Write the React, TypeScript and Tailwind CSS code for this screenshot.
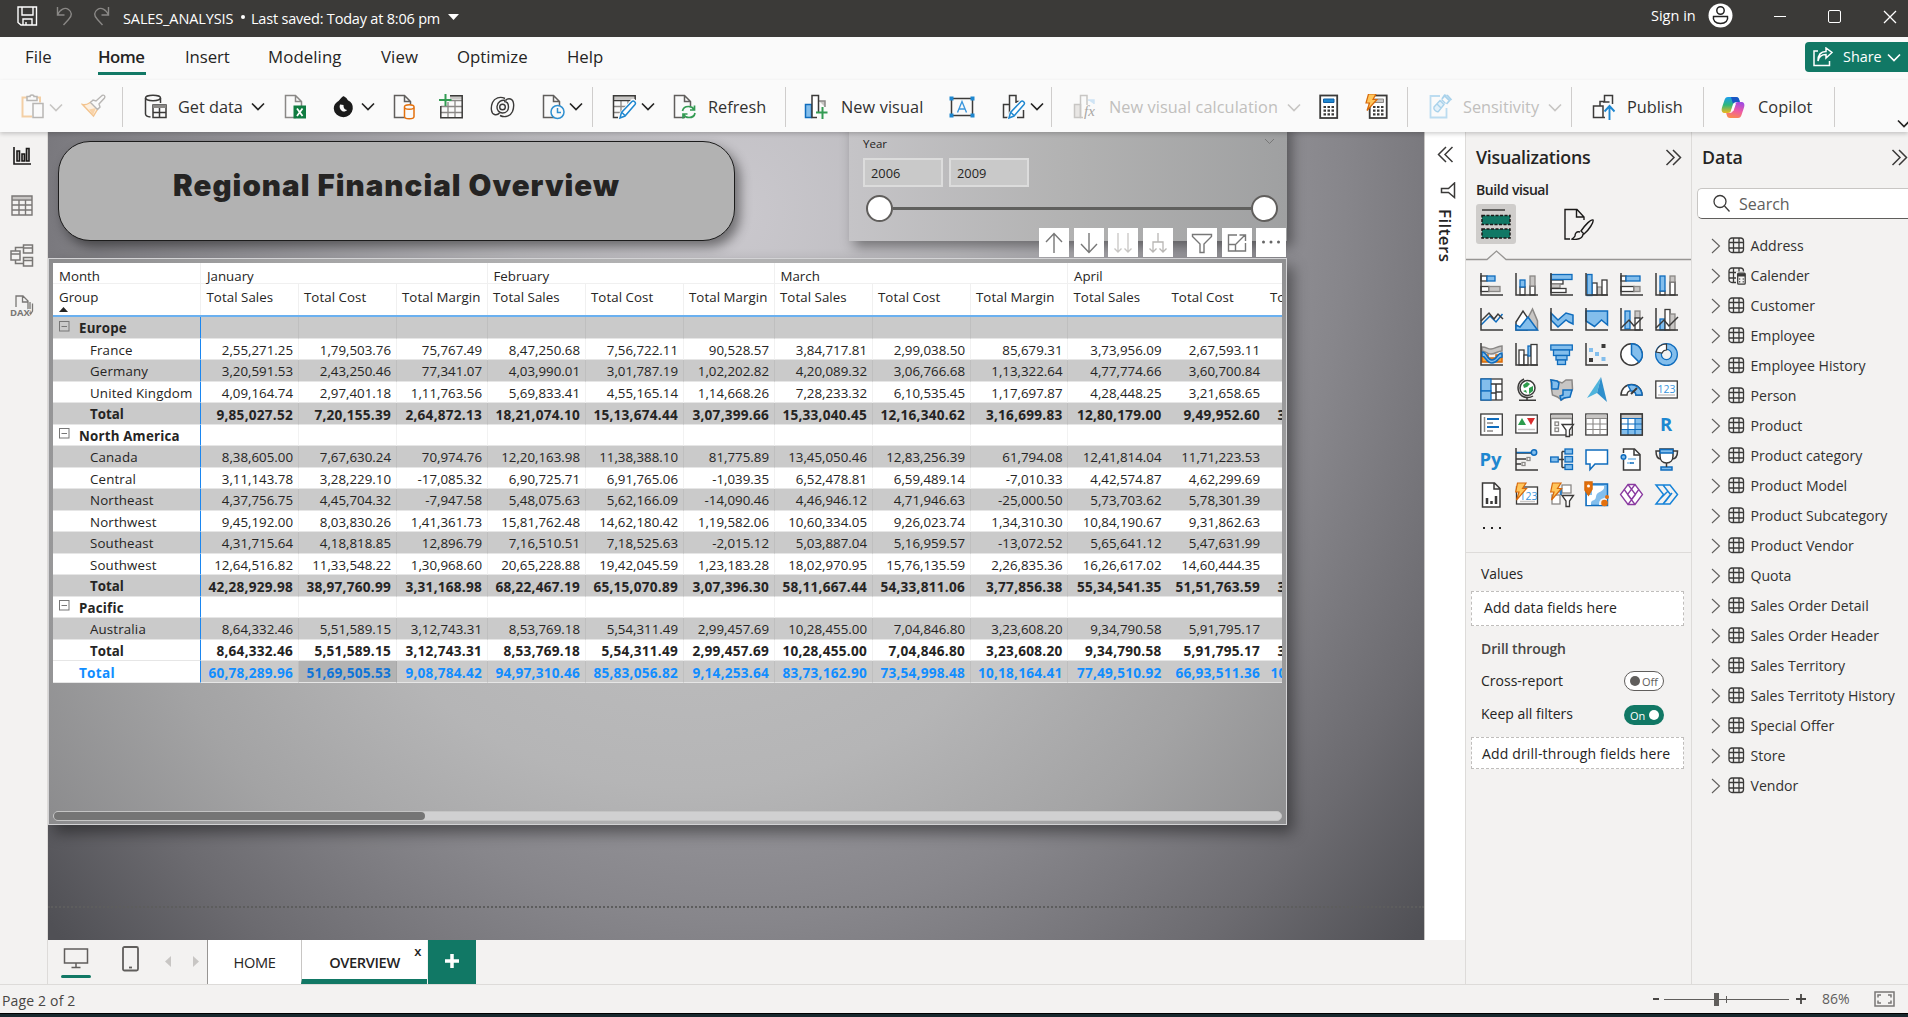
import React from "react";

type P = { className?: string };
const D = "#3b3a39";
const G = "#8a8886";
const L = "#c8c6c4";
const B = "#0f6cbd";
const F = "#83beec";
const W = "#ffffff";

function Svg({ w = 23, h = 23, className = "", children, sw = 1.5 }: { w?: number; h?: number; className?: string; children: React.ReactNode; sw?: number }) {
  return (
    <svg width={w} height={h} viewBox={`0 0 ${w} ${h}`} fill="none" stroke={D} strokeWidth={sw} className={"shrink-0 " + className}>
      {children}
    </svg>
  );
}

const Chevron = ({ className = "", color = "#252423" }: P & { color?: string }) => (
  <svg width="14" height="9" viewBox="0 0 14 9" fill="none" stroke={color} strokeWidth="1.7" className={"shrink-0 " + className}>
    <path d="M1 1.5l6 6 6-6" />
  </svg>
);

const Sep = ({ className = "" }: P) => <div className={"h-10 w-px shrink-0 bg-[#cfcdcc] " + className} />;

function Cell({ className = "", children }: P & { children: React.ReactNode }) {
  return <div className={"flex h-full shrink-0 items-center whitespace-nowrap " + className}>{children}</div>;
}

/* ---------- ribbon icons ---------- */
const Doc = ({ stroke = "#605e5c", children }: { stroke?: string; children?: React.ReactNode }) => (
  <Svg w={24} h={26}>
    <path d="M12 23.5H1.5V1.5h10l6 6V12M11.5 1.5v6h6" stroke={stroke} />
    {children}
  </Svg>
);
const Paste = () => (
  <Svg w={24} h={26}>
    <path d="M11 22.5H1.5v-19H6M16 3.5h3v5" stroke="#f3cfa5" strokeWidth="2" />
    <path d="M6 6.5v-4h3c0-2 4-2 4 0h3v4z" stroke="#b8b6b4" />
    <rect x="12" y="9.5" width="10" height="14" stroke="#b8b6b4" fill="#fafafa" />
  </Svg>
);
const Brush = () => (
  <Svg w={25} h={24} sw={1.4}>
    <path d="M1.500 10.500c4 1 6-1 8.500-2.500l7 6.500L12.500 22z" stroke="#f3c48f" fill="#fdf0e0" />
    <path d="M8 15.500l7-1.500-3 7z" fill="#f9d3a8" stroke="none" />
    <path d="M9.500 8.500L12 6l3 1 6-5.500c2-1 3.500.5 2.500 2.500L18 10l1 3-2.500 2.500z" stroke="#b8b6b4" fill="#fafafa" />
  </Svg>
);
const GetData = () => (
  <Svg w={24} h={26}>
    <ellipse cx="9" cy="4" rx="7.500" ry="2.700" />
    <path d="M1.500 4v16c0 1.500 2 2.600 5 3M16.500 4v5" />
    <rect x="9" y="11" width="13" height="12.500" />
    <path d="M9 12.500h13" strokeWidth="3" stroke={G} />
    <path d="M9 18.500h13M15.500 14v9" />
  </Svg>
);
const Excel = () => (
  <Doc stroke={G}>
    <rect x="9.500" y="11.500" width="12.500" height="13" fill="#107c41" stroke="none" />
    <path d="M13 14.500l5.500 7.500M18.500 14.500L13 22" stroke="#fff" strokeWidth="1.800" />
  </Doc>
);
const OneLake = () => (
  <Svg w={21} h={22}>
    <path d="M10.500 1c2 1 3.500 2 4 4 3 1.500 5 4 4.500 8-.5 4-4 7.500-8.500 7.500S1.500 17 1.500 12.500 4 7 6 5.500 8.500 2 10.500 1z" fill="#1b1b1b" stroke="#1b1b1b" />
    <path d="M7 8.500c-1 3 0 5 2 6.500 1.800 1 4 .5 5-1-2.500-.5-3.700-2-3.500-5z" fill="#fafafa" stroke="none" />
  </Svg>
);
const Sql = () => (
  <Doc>
    <path d="M11.500 13.500v9c0 3 9.500 3 9.500 0v-9" stroke="#e3700d" fill="#fafafa" />
    <ellipse cx="16.250" cy="13" rx="4.800" ry="2.300" stroke="#e3700d" fill="#fafafa" />
  </Doc>
);
const EnterData = () => (
  <Svg w={25} h={26}>
    <path d="M11 2h12v3H11z" fill={L} stroke="none" />
    <path d="M2 12.500h21M2 18.500h21M9 8v15M16 6v17M10 6.500h13" stroke={G} strokeWidth="1.300" />
    <path d="M11 1.700h12.200v22H1.800V12" />
    <path d="M6.500 0v12M0 6h12.500" stroke="#339b53" strokeWidth="2" />
  </Svg>
);
const Dataverse = () => (
  <Svg w={25} h={22} sw={1.4}>
    <path d="M15 2.500C10 0 4.500 2 2.500 6.500.5 11.500 1 17.500 4.500 18.500c3 .8 5-1.500 5-1.500" />
    <path d="M10 19.500c5 2.500 10.500.5 12.500-4 2-5 1.500-11.500-2-12.500-3-.8-5 1.500-5 1.500" />
    <path d="M15.500 4.500c-4-1-8 1.500-8.500 6-.3 3.500 2 6.500 5.500 6.500s6-2.500 6-6-2-5.500-4.500-5.500" />
    <circle cx="12.500" cy="11" r="2.800" />
  </Svg>
);
const Recent = () => (
  <Doc>
    <circle cx="15.500" cy="18" r="6.500" stroke="#2f8fd0" fill="#fafafa" />
    <path d="M15.500 14v4.500h3.500" stroke="#2f8fd0" />
  </Doc>
);
const Pencil = ({ x = 9, y = 6 }: { x?: number; y?: number }) => (
  <g transform={`translate(${x} ${y})`}>
    <path d="M0 19l1.500-5.500L12 1.500c1.500-1.500 4.500 1 3 3L5 16.500z" fill="#fafafa" stroke="#fafafa" strokeWidth="4" />
    <path d="M0 18l1.500-5.500L12 1.500c1.500-1.500 4.500 1 3 3L5 16z" fill="#fff" stroke="#1e87d0" />
    <path d="M2 12.500l3 3" stroke="#1e87d0" />
  </g>
);
const Transform = () => (
  <Svg w={25} h={26}>
    <path d="M2 2h21v3H2z" fill={L} stroke="none" />
    <path d="M2 12.500h18M2 18.500h9M9 6v17M16 6v9" stroke={G} strokeWidth="1.300" />
    <path d="M6 23.500H1.500V1.700h21.700V6.500H2" />
    <Pencil x={8} y={6} />
  </Svg>
);
const Refresh = () => (
  <Doc>
    <path d="M9.500 17c.5-3 3-4.500 6-4.500 2.500 0 4.500 1 5.500 3M22 19c-.5 3-3 4.500-6 4.500-2.500 0-4.500-1-5.500-3M21.500 11.500v4.500h-4.500M10 24.500V20h4.500" stroke="#339b53" strokeWidth="1.700" />
  </Doc>
);
const NewVisual = () => (
  <Svg w={24} h={26}>
    <rect x="1.500" y="10.500" width="6" height="13" fill={F} stroke={B} />
    <path d="M15 7h6v6" stroke={G} fill={L} />
    <path d="M13 23.500H8V1.500h6.500v17" fill="#fff" />
    <path d="M18.500 13v12M12 18.500h11.500" stroke="#339b53" strokeWidth="2" />
  </Svg>
);
const TextBox = () => (
  <Svg w={26} h={22}>
    <rect x="2.500" y="2.500" width="21" height="17" />
    <path d="M8.500 16.500l4.500-11 4.500 11M10 13h6" stroke="#3a96dd" strokeWidth="1.400" />
    <path d="M.5.500h4v4h-4zM21.500.500h4v4h-4zM.5 17.500h4v4h-4zM21.500 17.500h4v4h-4z" fill="#1e87d0" stroke="none" />
  </Svg>
);
const MoreVisual = () => (
  <Svg w={25} h={26}>
    <path d="M7.500 23.500H1.500v-13h6M7.500 23.500V1.500H14V9M14 7.500h7.500M21.500 16v7.500H15" />
    <Pencil x={7} y={6} />
  </Svg>
);
const VisualCalc = () => (
  <Svg w={24} h={26}>
    <rect x="1.500" y="10.500" width="6" height="13" stroke={L} fill="#e8e6e4" />
    <path d="M15 6h6v4" stroke="#cfe4f5" fill="#cfe4f5" />
    <path d="M10 23.500H7.500V1.500H14V11" stroke={L} />
    <text x="11" y="22" fontSize="15" fontStyle="italic" fill="#a8a6a4" stroke="none" className="font-['Liberation_Serif',serif]">fx</text>
  </Svg>
);
const Calc = ({ bolt = false }: { bolt?: boolean }) => (
  <Svg w={bolt ? 24 : 20} h={26}>
    <g transform={bolt ? "translate(3.500 0)" : ""}>
      <rect x="1.200" y="1.500" width="17" height="22.500" strokeWidth="1.800" fill="#fff" />
      <path d="M4.500 5h10.500v3.500H4.500z" fill={bolt ? L : "#1e87d0"} stroke={bolt ? G : "#1160a5"} strokeWidth="1" />
      <path d="M4.500 13h2.500M8.500 13H11M12.500 13h2.500M4.500 16.700h2.500M8.500 16.700H11M12.500 16.700h2.500M4.500 20.300h2.500M8.500 20.300H11M12.500 20.300h2.500" strokeWidth="2.200" />
    </g>
    {bolt && <path d="M3.500 0h7.500L8 5.500h4L2 16.500l2.500-7.500H1z" fill="#ffc65c" stroke="#d8690a" strokeWidth="1.200" />}
  </Svg>
);
const Sens = () => (
  <Svg w={24} h={26}>
    <path d="M11 2H1.500v21.500h16V14" stroke="#bcdcf0" strokeWidth="1.800" />
    <path d="M5 13l6-6.500 4 4-5.500 7c-2 1-5.500-2-4.500-4.500zM8 10l4 4M12.500 5.500l4 4" stroke="#a9d2eb" strokeWidth="1.400" fill="#e3f1fa" />
    <path d="M13 5l2.500-3.500 5 5-3 3.500M18 1l4.500 5M16.500.500v3" stroke="#a9d2eb" strokeWidth="1.800" />
  </Svg>
);
const Publish = () => (
  <Svg w={24} h={26}>
    <path d="M8 11V7.500h4M12.500 8V1.500h8V10M13 23.500H1.500V12h9.500v4M8 12V7.500M11 12v11.500M11 8h6.500" />
    <path d="M17.500 26V12.500M12.500 17.500l5-5.500 5 5.500" stroke="#1e87d0" strokeWidth="1.900" />
  </Svg>
);
const Copilot = () => (
  <svg width="24" height="23" viewBox="0 0 24 23" className="shrink-0">
    <defs>
      <linearGradient id="cpa" x1="0" y1="0" x2="0" y2="1"><stop offset="0" stopColor="#1b9df0" /><stop offset=".5" stopColor="#2fb77a" /><stop offset="1" stopColor="#f1b81d" /></linearGradient>
      <linearGradient id="cpb" x1="0.6" y1="0" x2="0.3" y2="1"><stop offset="0" stopColor="#a14be0" /><stop offset=".5" stopColor="#ee5aa5" /><stop offset="1" stopColor="#fb8b4b" /></linearGradient>
    </defs>
    <path d="M7 1h8c2 0 2.800 1 3.300 3l.5 2h-3.500c-2 0-3 1-3.600 3L10 14.500c-.6 1.800-1.300 2.500-3 2.500H4c-3 0-4-2-3-5.500L3.500 4C4.200 2 5 1 7 1z" fill="url(#cpa)" />
    <path d="M10 1h5c2 0 2.800 1 3.300 3l.5 2h-3.500c-2 0-3 1-3.300 2z" fill="#1a56c4" />
    <path d="M17 22H9c-2 0-2.800-1-3.300-3L5.200 17h3.500c2 0 3-1 3.600-3L14 8.500c.6-1.800 1.300-2.500 3-2.500h3c3 0 4 2 3 5.500L20.500 19c-.7 2-1.500 3-3.500 3z" fill="url(#cpb)" />
    <path d="M10.200 15L12.800 7.500h2.200l-2.600 7.500z" fill="#fff" />
  </svg>
);

/* ---------- visual gallery ---------- */
const axis = <path d="M1 0v22h22" />;
const r = (x: number, y: number, w: number, h: number, s = D, f = W) => <rect x={x} y={y} width={w} height={h} stroke={s} fill={f} strokeWidth="1.3" />;
const bolt = <path d="M2.500 0H11L7.500 5.500h4L1.500 17l2.500-8H.700z" fill="#ffc65c" stroke="#d8690a" strokeWidth="1.2" />;
const txt = (s: string, x: number, y: number, size: number, fill = "#1e87d0", bold = true) => (
  <text x={x} y={y} fontSize={size} fill={fill} stroke="none" fontWeight={bold ? 700 : 400} className="font-['Open_Sans',sans-serif]">{s}</text>
);

const gallery: React.ReactNode[] = [
  <>{r(1, 3, 6, 5)}{r(7, 3, 8, 5, B, F)}{r(1, 13.5, 8, 5)}{r(9, 13.5, 11, 5, G, L)}{axis}</>,
  <>{r(5, 14, 5, 8)}{r(5, 7, 5, 7, B, F)}{r(15, 13, 5, 9)}{r(15, 3, 5, 10, G, L)}{axis}</>,
  <>{r(1, 7, 12, 4)}{r(1, 11, 9, 4, G, L)}{r(1, 15.5, 15, 4)}{r(1, 1.5, 21, 5, B, F)}{axis}</>,
  <>{r(12, 14, 5, 8, G, L)}{r(7, 10, 5, 12)}{r(17, 7, 5, 15)}{r(2, 1.5, 5, 21, B, F)}{axis}</>,
  <>{r(1, 3, 5, 5)}{r(6, 3, 14, 5, B, F)}{r(1, 13.5, 13, 5)}{r(14, 13.5, 6, 5, G, L)}{axis}</>,
  <>{r(5, 18, 5, 4)}{r(5, 3, 5, 15, B, F)}{r(15, 9, 5, 13)}{r(15, 3, 5, 6, G, L)}{axis}</>,
  <><path d="M1 17L10 8l6 6 6.500-8" stroke={B} /><path d="M1 13l8-8 5 6 4-5 5 5" />{axis}</>,
  <><path d="M12 22V12L17.500 1 22.500 13v9z" fill={L} stroke={G} /><path d="M1 22v-8L8 3l10 15-6 4z" fill={W} /><path d="M1 22v-5l4 2 8-10 9.500 13z" fill={F} stroke={B} /></>,
  <><path d="M1 5l7 7 8-7 7 2v9l-4-2-3-2-8 7-7-7z" fill={F} stroke={B} />{axis}</>,
  <><path d="M1 3h21.500v14l-6-5-7 6.500L1 13z" fill={F} stroke={B} />{axis}</>,
  <>{r(5, 3, 5, 18, B, F)}{r(15, 3, 5, 7, G, L)}{r(15, 10, 5, 12)}<path d="M1 20l8-8 5 6 9-9" />{axis}</>,
  <>{r(5, 11, 5, 11, B, F)}{r(10, 1.5, 5, 20.5)}{r(15, 6, 5, 16, G, L)}<path d="M1 20l8-8 5 6 9-9" />{axis}</>,
  <><path d="M2 4c5 0 5 2 9 2s6-3 11-3v5c-5 0-6 3-11 3S6 8 2 8z" fill={L} stroke={G} /><path d="M2 12h6v3h8v-3h6v7h-7l-2-2h-4v2H2z" fill="#f6a33a" stroke="#d8690a" /><path d="M2 9c5 0 5 8 10 8s5-7 10-7v4c-4 0-4 6-10 6S6 13 2 13z" fill={F} stroke={B} />{axis}</>,
  <>{r(4, 7, 5, 15)}{r(9, 12, 4, 10)}{r(13, 3, 3, 10, B, F)}{r(16, 1.5, 6, 20.5)}{axis}</>,
  <>{r(0.8, 2, 21.5, 5, B, F)}{r(3.5, 7, 16, 5.5, B, F)}{r(6, 12.5, 11, 4.5, B, F)}{r(7.5, 17, 8, 4.5, B, F)}</>,
  <>{axis}<path d="M4 5h4v4H4zM10 9h4v4h-4zM16.500 14h4v4h-4z" fill={F} stroke="none" /><path d="M16.500 1h4v4h-4zM4 15h4v4H4z" fill={D} stroke="none" /></>,
  <><circle cx="11.500" cy="11.500" r="10.700" fill={W} /><path d="M11.500.800a10.700 10.700 0 0 1 7.500 18.300L11.500 11.500z" fill={F} stroke={B} /></>,
  <><circle cx="11.500" cy="11.500" r="8" stroke={B} strokeWidth="7" /><circle cx="11.500" cy="11.500" r="8" stroke={F} strokeWidth="4.500" /><path d="M1 9A10.500 10.500 0 0 1 11.500 1v6A5 5 0 0 0 7 10z" fill={W} stroke={D} strokeWidth="1.200" /></>,
  <>{r(1, 1, 21, 21)}{r(1, 1, 10, 12, B, F)}{r(1, 13, 10, 9, B, F)}<path d="M11 6h11M16 6v16M16 14h6M11 15h5" /></>,
  <><circle cx="12.500" cy="10" r="7.500" fill={W} stroke={D} /><path d="M8 7l4-3 3 2-3 3-3 1zM14 10l4-2v5l-4 3zM8 13l3-1 1 3z" fill="#2d9c4c" stroke="none" /><path d="M9 1C2 4 1 13 7 18c4 2 8 2 11 0M12 19v3M4 22.200h17" /></>,
  <><path d="M1 2l6 1 5 2 4-3h6l.5 9-3 6-5 3-3 2-4-3-5-2-1-6z" fill={L} stroke={G} /><path d="M1 2l6 1 2 2-1 6H2C1 9 3 7 1 2zM13 12h9l-2 7-6 1-3 2-1-4 3-1z" fill={F} stroke={B} /></>,
  <><path d="M16-1L2 20l10-5z" fill="#4fb4dc" stroke="none" /><path d="M16-1l6 25-10-9z" fill="#2e8fcc" stroke="none" /></>,
  <><path d="M1 17a10.500 10.500 0 0 1 21 0h-6a4.500 4.500 0 0 0-9 0z" fill={W} /><path d="M8 7.500A10.500 10.500 0 0 1 22 17h-6a4.500 4.500 0 0 0-5-4z" fill={F} stroke={B} /><path d="M11 16l6-6" strokeWidth="2" /></>,
  <>{r(0.8, 3, 21.5, 17)}{txt("123", 2.6, 14.5, 10.5, "#3a96dd", false)}<path d="M3 17h17" stroke={L} /></>,
  <>{r(0.8, 1, 21.5, 21)}<path d="M4.500 4v15" stroke={G} /><path d="M7 6h12M7 14h12" stroke={B} strokeWidth="2" /><path d="M7 10h6M7 18h6" stroke={G} /></>,
  <>{r(0.8, 2, 21.5, 18)}<path d="M3 12L7 5l4 7z" fill="#2d9c4c" stroke="none" /><path d="M12 5h8l-4 7z" fill="#d92c2c" stroke="none" /><path d="M3 16.500h17" stroke={L} /></>,
  <>{r(0.8, 1, 21.5, 21)}<path d="M1 2h21v3H1z" fill={L} stroke="none" /><path d="M1 5.500h21" stroke={G} />{r(5, 9, 3.5, 3.5, G)}{r(5, 15, 3.5, 3.5, G)}<path d="M12 11.500h11.500l-4 5.500v6.500h-3.500V17z" fill={W} strokeWidth="1.300" /></>,
  <>{r(0.8, 1, 21.5, 21)}<path d="M1.500 1.500h20v4h-20z" fill={L} stroke="none" /><path d="M1 5.500h21M1 11h21M1 16.500h21M8 6v16M15 6v16" stroke={G} strokeWidth="1.100" /></>,
  <>{r(0.8, 1, 21.5, 21)}<path d="M1.500 1.500h20v4h-20z" fill={L} stroke="none" /><path d="M15 5.500h7V22H1v-5.500h14z" fill={F} stroke="none" /><path d="M1 5.500h21M1 11h21M1 16.500h21M8 6v16M15 6v16" stroke={B} strokeWidth="1.100" /><path d="M.8 1h21.500v21H.8z" /></>,
  <>{txt("R", 5, 18, 18.5)}</>,
  <>{txt("Py", -0.5, 18, 18.5)}</>,
  <><path d="M1 5h15M1 11h10M1 16h5" /><circle cx="19" cy="4.500" r="2.700" stroke={B} fill={F} /><path d="M1 4.500h15" stroke={B} />{r(12, 9.5, 3, 3, G)}{r(7, 14.5, 3, 3, G)}{axis}</>,
  <><path d="M8 11.500h6M12 3.500v16M12 3.500h3M12 19.500h3" />{r(0.7, 9, 7.5, 5, B, F)}{r(15, 1, 7.5, 5, B, F)}{r(15, 8.5, 7.5, 5.5, B, F)}{r(15, 16.5, 7.5, 5, B, F)}</>,
  <><path d="M1 2h21.500v14H10l-5 5.500V16H1z" fill={W} stroke={B} /></>,
  <><path d="M3.500 5V1h11l5.500 5.500V22H3.500V12" fill={W} /><path d="M14 1v6h6" /><circle cx="3.500" cy="9" r="2.300" stroke={B} fill={F} /><path d="M8 11h8M7 15h4" stroke={F} /><path d="M10 15h4" stroke={B} /></>,
  <><path d="M5 1h13v7c0 4-2.500 7-6.500 7S5 12 5 8z" fill={W} /><path d="M5 1.500h13V5H5zM6 19h11v3H6z" fill={F} stroke={B} /><path d="M5 3H1c0 5 1 8 5 8M18 3h4.500c0 5-1.500 8-5.500 8M11.500 15v4" /></>,
  <><path d="M2.500 0h12l5.500 5.500V24H2.500zM14 0v6h6" fill={W} /><path d="M7 21v-6M11.500 21v-3M16 21v-8" strokeWidth="2.500" /></>,
  <>{r(1.5, 4, 21, 17)}{txt("123", 4.5, 16.5, 10.5, "#3a96dd", false)}<path d="M5 18.500h15" stroke={L} />{bolt}</>,
  <>{r(2, 12, 8, 9, G)}{r(12, 2, 9, 8, G)}<path d="M6 6h5v6" stroke={B} fill={F} /><path d="M12 12.500h11.500l-4 5.500v5.500h-3.500V18z" fill={W} strokeWidth="1.300" />{bolt}</>,
  <><path d="M1 1h21.500v21.500H1z" fill={F} stroke={B} /><path d="M19 3c1 4-3 5-6 7s-1 6-4 7-3 2-3 5H2V12h5V3z" fill={W} stroke="none" /><path d="M14 22c0-4 1-6 5-7s3 4 3 7z" fill="#f3f2f1" stroke="none" /><path d="M0-1h7v7l-3.500 6L0 7z" fill="#e3700d" stroke="#d8690a" /><circle cx="3.500" cy="3" r="1.500" fill={W} stroke="none" /><circle cx="19.500" cy="20" r="3.300" fill="#e3700d" stroke="none" /><circle cx="22" cy="14" r="2" fill="#e3700d" stroke="none" /></>,
  <g stroke="#8a3aa0" strokeWidth="1.3"><path d="M8 1.500h7l7.500 10-7.500 10H8L.500 11.500z" fill={W} /><path d="M8 1.500l7.500 10-7.500 10M15 1.500l-7.500 10 7.500 10M4.200 6.500l7.300 10M18.800 6.500l-7.300 10" /></g>,
  <><path d="M1 2h14l7.500 9.500L15 21H1l7.500-9.500zM8 2l7.500 9.500L8 21M4 17l9-9M10 19l7-9" stroke="#1683d8" fill="none" /></>,
];

/* ---------- matrix ---------- */
const GRID = "grid grid-cols-[148px_97.5px_98px_91px_98px_98px_91px_98px_98px_97.5px_98px_98.5px_120px]";
type Row = { n: string; k: "g" | "r" | "t" | "s"; v?: string };
const rows: Row[] = [
  { n: "Europe", k: "g" },
  { n: "France", k: "r", v: "2,55,271.25 1,79,503.76 75,767.49 8,47,250.68 7,56,722.11 90,528.57 3,84,717.81 2,99,038.50 85,679.31 3,73,956.09 2,67,593.11" },
  { n: "Germany", k: "r", v: "3,20,591.53 2,43,250.46 77,341.07 4,03,990.01 3,01,787.19 1,02,202.82 4,20,089.32 3,06,766.68 1,13,322.64 4,77,774.66 3,60,700.84" },
  { n: "United Kingdom", k: "r", v: "4,09,164.74 2,97,401.18 1,11,763.56 5,69,833.41 4,55,165.14 1,14,668.26 7,28,233.32 6,10,535.45 1,17,697.87 4,28,448.25 3,21,658.65" },
  { n: "Total", k: "t", v: "9,85,027.52 7,20,155.39 2,64,872.13 18,21,074.10 15,13,674.44 3,07,399.66 15,33,040.45 12,16,340.62 3,16,699.83 12,80,179.00 9,49,952.60 3" },
  { n: "North America", k: "g" },
  { n: "Canada", k: "r", v: "8,38,605.00 7,67,630.24 70,974.76 12,20,163.98 11,38,388.10 81,775.89 13,45,050.46 12,83,256.39 61,794.08 12,41,814.04 11,71,223.53" },
  { n: "Central", k: "r", v: "3,11,143.78 3,28,229.10 -17,085.32 6,90,725.71 6,91,765.06 -1,039.35 6,52,478.81 6,59,489.14 -7,010.33 4,42,574.87 4,62,299.69" },
  { n: "Northeast", k: "r", v: "4,37,756.75 4,45,704.32 -7,947.58 5,48,075.63 5,62,166.09 -14,090.46 4,46,946.12 4,71,946.63 -25,000.50 5,73,703.62 5,78,301.39" },
  { n: "Northwest", k: "r", v: "9,45,192.00 8,03,830.26 1,41,361.73 15,81,762.48 14,62,180.42 1,19,582.06 10,60,334.05 9,26,023.74 1,34,310.30 10,84,190.67 9,31,862.63" },
  { n: "Southeast", k: "r", v: "4,31,715.64 4,18,818.85 12,896.79 7,16,510.51 7,18,525.63 -2,015.12 5,03,887.04 5,16,959.57 -13,072.52 5,65,641.12 5,47,631.99" },
  { n: "Southwest", k: "r", v: "12,64,516.82 11,33,548.22 1,30,968.60 20,65,228.88 19,42,045.59 1,23,183.28 18,02,970.95 15,76,135.59 2,26,835.36 16,26,617.02 14,60,444.35" },
  { n: "Total", k: "t", v: "42,28,929.98 38,97,760.99 3,31,168.98 68,22,467.19 65,15,070.89 3,07,396.30 58,11,667.44 54,33,811.06 3,77,856.38 55,34,541.35 51,51,763.59 3" },
  { n: "Pacific", k: "g" },
  { n: "Australia", k: "r", v: "8,64,332.46 5,51,589.15 3,12,743.31 8,53,769.18 5,54,311.49 2,99,457.69 10,28,455.00 7,04,846.80 3,23,608.20 9,34,790.58 5,91,795.17" },
  { n: "Total", k: "t", v: "8,64,332.46 5,51,589.15 3,12,743.31 8,53,769.18 5,54,311.49 2,99,457.69 10,28,455.00 7,04,846.80 3,23,608.20 9,34,790.58 5,91,795.17 3" },
  { n: "Total", k: "s", v: "60,78,289.96 51,69,505.53 9,08,784.42 94,97,310.46 85,83,056.82 9,14,253.64 83,73,162.90 73,54,998.48 10,18,164.41 77,49,510.92 66,93,511.36 10" },
];

function Matrix() {
  const cols = Array.from({ length: 12 }, (_, i) => i);
  return (
    <div className="w-[1229px] overflow-hidden text-[13.3px] leading-none text-[#252423]">
      <div className="w-[1340px] border-b-2 border-[#6ab0f0] bg-white">
        <div className={GRID + " h-[21px]"}>
          <div className="flex items-center border-r border-b border-[#f0f0f0] pt-[7px] pl-[6px]">Month</div>
          {["January", "February", "March", "April"].map((m, i) => (
            <div key={m} className={"col-span-3 flex items-center border-b border-[#f0f0f0] pt-[7px] pl-[6px] " + (i < 3 ? "border-r" : "")}>{m}</div>
          ))}
        </div>
        <div className={GRID + " h-[31px]"}>
          <div className="flex flex-col border-r border-[#f0f0f0] pt-[7px] pl-[6px]">
            <span>Group</span>
            <svg width="9" height="5" viewBox="0 0 9 5" className="mt-[3px]"><path d="M0 5L4.500 0 9 5z" fill="#252423" /></svg>
          </div>
          {cols.map((i) => (
            <div key={i} className={"border-[#f0f0f0] pt-[7px] pl-[5.5px] tracking-[0.05px] whitespace-nowrap " + (i < 9 ? "border-r" : "")}>{["Total Sales", "Total Cost", "Total Margin"][i % 3]}</div>
          ))}
        </div>
      </div>
      {rows.map((row, ri) => {
        const v = row.v ? row.v.split(" ") : [];
        const bold = row.k !== "r";
        const bg = row.k === "s" ? "bg-[#cacaca] text-[#118dff]" : ri % 2 === 0 ? "bg-[#cacaca]" : "bg-white";
        return (
          <div key={ri} className={GRID + " h-[21.5px] w-[1340px] " + bg + (bold ? " text-[13.6px] font-bold tracking-[0.25px]" : "")}>
            <div className={"flex items-center border-r border-r-[#1a86f0] border-b border-b-[#e6e6e6] pt-[3px] " + (row.k === "s" ? "bg-white" : "")}>
              {row.k === "g" && (
                <svg width="11" height="11" viewBox="0 0 11 11" className="mr-[9px] mb-[5px] ml-[6px]" fill="none" stroke="#777"><rect x=".5" y=".5" width="9.500" height="9.500" /><path d="M2.500 5.500H8" /></svg>
              )}
              <span className={row.k === "g" ? "text-[13.3px] tracking-[0.2px]" : row.k === "s" ? "pl-[26px]" : row.k === "t" ? "pl-[37px] text-[13.3px] tracking-normal" : "pl-[37px] tracking-[0.15px]"}>{row.n}</span>
            </div>
            {cols.map((i) => (
              <div
                key={i}
                className={
                  "flex items-center border-b border-b-[#e6e6e6] pt-[3px] " +
                  (i < 9 ? "border-r border-r-black/5 " : "") +
                  (i === 11 ? (row.k === "s" ? "pl-[6px]" : "pl-[13px]") : "justify-end pr-[4.5px]") +
                  (row.k === "s" && i === 1 ? " bg-[#b3b3b3] text-[#0f74d8]" : "")
                }
              >
                {v[i] || ""}
              </div>
            ))}
          </div>
        );
      })}
    </div>
  );
}

const tool = "flex h-[29px] w-[30px] items-center justify-center bg-white";

function Canvas() {
  return (
    <div className="relative h-[808px] w-[1376px] shrink-0 overflow-hidden bg-[radial-gradient(ellipse_1010px_1180px_at_690px_80px,#cac8cd_0%,#bab9bd_22%,#98979c_46%,#87868b_60%,#6c6b70_77%,#505055_91%)]">
      <div className="absolute top-[774px] left-0 h-0 w-full border-t-2 border-dotted border-[#5d5d5d]" />
      <div className="absolute top-[9px] left-[10px] flex h-[100px] w-[677px] justify-center rounded-[32px] border-[1.5px] border-[#1c1c1c] bg-[#b2b2b2] pt-[23px] shadow-[5px_6px_12px_rgba(0,0,0,0.45)]">
        <span className="text-[29.5px] leading-[40px] font-black tracking-[1.05px] whitespace-nowrap text-[#252423] font-['Inter',sans-serif]">Regional Financial Overview</span>
      </div>

      <div className="absolute top-[-10px] left-[801px] h-[119px] w-[438px] bg-linear-to-r from-[#c5c4c7] via-[#b2b2b2] to-[#9fa0a1] pt-[15px] pl-[14px] text-[#252423] shadow-[5px_6px_12px_rgba(0,0,0,0.4)]">
        <div className="flex items-start justify-between pr-[12px] text-[11.5px] leading-[14px]">
          <span>Year</span>
          <svg width="11" height="7" viewBox="0 0 11 7" fill="none" stroke="#777" className="mt-px"><path d="M1 1l4.500 4.500L10 1" /></svg>
        </div>
        <div className="mt-[7px] flex gap-[6px] text-[12.8px]">
          <div className="flex h-[29px] w-20 items-center border-2 border-[#dcdcdc] bg-[#c9c9c9] pt-[2px] pl-[6px]">2006</div>
          <div className="flex h-[29px] w-20 items-center border-2 border-[#dcdcdc] bg-[#c9c9c9] pt-[2px] pl-[6px]">2009</div>
        </div>
        <div className="mt-[8px] ml-[3px] flex w-[412px] items-center">
          <div className="size-[27px] shrink-0 rounded-full border-2 border-[#605e5c] bg-white" />
          <div className="h-[3px] flex-1 bg-[#60605e]" />
          <div className="size-[27px] shrink-0 rounded-full border-2 border-[#605e5c] bg-white" />
        </div>
      </div>

      <div className="absolute top-[126px] left-0 flex h-[567px] w-[1239px] flex-col border-[1.5px] border-[#d3d3d5] bg-[radial-gradient(ellipse_820px_620px_at_640px_280px,#bfbfc0_0%,#b5b5b6_40%,#a3a3a4_66%,#868688_96%)] pt-[4px] pl-[4px] shadow-[6px_8px_14px_rgba(0,0,0,0.42)]">
        <Matrix />
        <div className="mt-auto mb-[3px] h-[10px] w-[1229px] rounded-full border border-[#c4c4c4] bg-[#d0d0d1]">
          <div className="h-full w-[371px] rounded-full bg-[#757575]" />
        </div>
      </div>

      <div className="absolute top-[96px] left-[991px] flex gap-[4.5px]">
        <div className={tool}><Svg w={22} h={24} sw={1.4}><path d="M11 22V3M3 11l8-8.500 8 8.500" stroke="#777" /></Svg></div>
        <div className={tool}><Svg w={22} h={24} sw={1.4}><path d="M11 2v19M3 13l8 8.500 8-8.500" stroke="#777" /></Svg></div>
        <div className={tool}><Svg w={22} h={24} sw={1.3}><path d="M6 2v19M16 2v19M2.500 17.500L6 21l3.500-3.500M12.500 17.500L16 21l3.500-3.500" stroke={L} /></Svg></div>
        <div className={tool}><Svg w={22} h={24} sw={1.3}><path d="M11 2v9M6 21V11h10v10M2.500 17.500L6 21l3.500-3.500M12.500 17.500L16 21l3.500-3.500" stroke="#b8b6b4" /></Svg></div>
        <div className={tool + " ml-[10px]"}><Svg w={22} h={22} sw={1.4}><path d="M1.500 2.500h19v2L13 12v8.500H9V12L1.500 4.500z" stroke="#777" /></Svg></div>
        <div className={tool}><Svg w={22} h={20} sw={1.4}><path d="M11 2H2.500v16h17V10M2.500 11.500h7V18M10 11l9-9M13.500 2H19.500v6" stroke="#777" /></Svg></div>
        <div className={tool}><Svg w={22} h={20}><g fill="#666" stroke="none"><circle cx="3.500" cy="9" r="1.500" /><circle cx="11" cy="9" r="1.500" /><circle cx="18.500" cy="9" r="1.500" /></g></Svg></div>
      </div>
    </div>
  );
}

const DblChev = ({ left = false }: { left?: boolean }) => (
  <Svg w={17} h={17} sw={1.5}>
    {left ? <path d="M9 1L1.500 8.500 9 16M15.500 1L8 8.500l7.500 7.500" /> : <path d="M1.500 1L9 8.500 1.500 16M8 1l7.500 7.500L8 16" />}
  </Svg>
);

const TableIcon = ({ calc = false }: { calc?: boolean }) => (
  <Svg w={18} h={18} sw={1.3} className="mx-px">
    <rect x="1" y="1" width="14.500" height="14.500" rx="3" />
    <path d="M5.500 1v14.500M11 1v14.500M1 5.500h14.500M1 11h14.500" />
    {calc && (
      <>
        <rect x="8" y="4.500" width="10" height="13.500" fill="#f3f2f1" stroke="none" />
        <rect x="9.700" y="6.200" width="7.500" height="11" rx="1" />
        <path d="M9.700 8h7.500" strokeWidth="3" />
        <path d="M11.200 12h1M14.700 12h1M11.200 14.700h1M14.700 14.700h1" strokeWidth="1.400" />
      </>
    )}
  </Svg>
);

const tables = ["Address", "Calender", "Customer", "Employee", "Employee History", "Person", "Product", "Product category", "Product Model", "Product Subcategory", "Product Vendor", "Quota", "Sales Order Detail", "Sales Order Header", "Sales Territory", "Sales Territoty History", "Special Offer", "Store", "Vendor"];

export default function App() {
  return (
    <div className="flex h-[1017px] w-[1908px] flex-col overflow-hidden bg-[#f3f2f1] leading-none text-[#252423] font-['Open_Sans',sans-serif]">
      {/* title bar */}
      <div className="flex h-[37px] shrink-0 items-start bg-[#3b3a38] text-[14.5px] text-white">
        <Svg w={21} h={20} className="mt-[6px] ml-[17px]" sw={1.4}>
          <path d="M1 1h18.500v18H4l-3-2.500zM5 1v8h11V1M6 19v-6h9v6M9 16v3" stroke="#fff" />
        </Svg>
        <Svg w={17} h={20} className="mt-[6px] ml-[18px]" sw={1.4}><path d="M1.500 1v8h7M1.500 9C4 3 9 1 12.500 3.500s4 6 0 10L7.500 19" stroke="#8a8886" /></Svg>
        <Svg w={17} h={20} className="mt-[6px] ml-[20px]" sw={1.4}><path d="M15.500 1v8h-7M15.500 9C13 3 8 1 4.500 3.500s-4 6 0 10L9.500 19" stroke="#8a8886" /></Svg>
        <span className="mt-[12px] ml-[13px] w-[112px] tracking-[-0.12px] whitespace-nowrap">SALES_ANALYSIS</span>
        <span className="mt-[15px] ml-[6px] size-1 rounded-full bg-white" />
        <span className="mt-[12px] ml-[6px] w-[193px] tracking-[-0.2px] whitespace-nowrap">Last saved: Today at 8:06 pm</span>
        <svg width="11" height="6" viewBox="0 0 11 6" className="mt-[14px] ml-[4px]"><path d="M0 0h11L5.500 6z" fill="#fff" /></svg>
        <span className="mt-[9px] ml-auto w-[48px] whitespace-nowrap">Sign in</span>
        <svg width="25" height="25" viewBox="0 0 25 25" className="mt-[3px] ml-[9px]"><circle cx="12.500" cy="12.500" r="12" fill="#fff" /><g fill="none" stroke="#222" strokeWidth="1.500"><circle cx="12.500" cy="7.500" r="3.700" /><path d="M5.500 13.500h14c1 4-2 7-7 7s-8-3-7-7z" /></g></svg>
        <div className="mt-[16px] ml-[41px] h-px w-[12px] bg-white" />
        <div className="mt-[10px] ml-[42px] size-[13px] rounded-[2px] border-[1.5px] border-white" />
        <Svg w={14} h={14} className="mt-[10px] mr-[11px] ml-[42px]" sw={1.3}><path d="M1 1l12 12M13 1L1 13" stroke="#fff" /></Svg>
      </div>

      {/* menu */}
      <div className="flex h-[43px] shrink-0 bg-[#fafafa] text-[16.8px]">
        <div className="mt-[12px] w-[72px] pl-[25px]">File</div>
        <div className="ml-[26px] flex w-[48px] flex-col font-semibold tracking-[-0.5px]"><span className="mt-[12px]">Home</span><span className="mt-[6px] h-[3px] bg-[#117865]" /></div>
        <div className="mt-[12px] ml-[39px] w-[83px] tracking-[-0.1px]">Insert</div>
        <div className="mt-[12px] w-[113px] tracking-[0.1px]">Modeling</div>
        <div className="mt-[12px] w-[76px] tracking-[0.1px]">View</div>
        <div className="mt-[12px] w-[110px]">Optimize</div>
        <div className="mt-[12px]">Help</div>
        <div className="mt-[5px] ml-auto flex h-[30px] w-[103px] items-center rounded-l-[4px] bg-[#117865] text-[14.4px] text-white">
          <Svg w={20} h={20} className="ml-[8px]"><path d="M5 4H1v14.500h15.500V14M5 14c1-5 4-6.500 8-6.500V11l6-5.500L13 1v3.500C8 4.500 5 8 5 14z" stroke="#fff" /></Svg>
          <span className="ml-[10px] w-[44px]">Share</span>
          <Chevron color="#fff" />
        </div>
      </div>

      {/* ribbon */}
      <div className="z-10 flex h-[52px] shrink-0 items-center bg-[#fafafa] pt-[2px] text-[16.3px] text-[#323130] shadow-[0_2px_4px_rgba(0,0,0,0.18)]">
        <Cell className="ml-[21px] w-[28px]"><Paste /></Cell>
        <Cell className="w-[32px]"><Chevron color={L} /></Cell>
        <Cell className="w-[41px] pb-[2px]"><Brush /></Cell>
        <Sep />
        <Cell className="ml-[21px] w-[34px]"><GetData /></Cell>
        <Cell className="w-[73px]">Get data</Cell>
        <Cell className="w-[33px] pb-[2px]"><Chevron /></Cell>
        <Cell className="w-[49px]"><Excel /></Cell>
        <Cell className="w-[28px]"><OneLake /></Cell>
        <Cell className="w-[32px] pb-[2px]"><Chevron /></Cell>
        <Cell className="w-[46px]"><Sql /></Cell>
        <Cell className="w-[51px]"><EnterData /></Cell>
        <Cell className="w-[52px]"><Dataverse /></Cell>
        <Cell className="w-[27px]"><Recent /></Cell>
        <Cell className="w-[23px] pb-[2px]"><Chevron /></Cell>
        <Sep />
        <Cell className="ml-[19px] w-[29px]"><Transform /></Cell>
        <Cell className="w-[32px] pb-[2px]"><Chevron /></Cell>
        <Cell className="w-[35px]"><Refresh /></Cell>
        <Cell className="w-[77px]">Refresh</Cell>
        <Sep />
        <Cell className="ml-[18px] w-[37px]"><NewVisual /></Cell>
        <Cell className="w-[108px] tracking-[0.1px]">New visual</Cell>
        <Cell className="w-[53px]"><TextBox /></Cell>
        <Cell className="w-[28px]"><MoreVisual /></Cell>
        <Cell className="w-[21px] pb-[2px]"><Chevron /></Cell>
        <Sep />
        <Cell className="ml-[21px] w-[36px]"><VisualCalc /></Cell>
        <Cell className="w-[178px] tracking-[0.08px] text-[#c1bfbd]">New visual calculation</Cell>
        <Cell className="w-[32px]"><Chevron color={L} /></Cell>
        <Cell className="w-[46px]"><Calc /></Cell>
        <Cell className="w-[42px]"><Calc bolt /></Cell>
        <Sep />
        <Cell className="ml-[21px] w-[34px]"><Sens /></Cell>
        <Cell className="w-[85px] text-[#c1bfbd]">Sensitivity</Cell>
        <Cell className="w-[23px]"><Chevron color={L} /></Cell>
        <Sep />
        <Cell className="ml-[20px] w-[35px]"><Publish /></Cell>
        <Cell className="w-[76px]">Publish</Cell>
        <Sep />
        <Cell className="ml-[17px] w-[37px]"><Copilot /></Cell>
        <Cell className="w-[76px] tracking-[0.1px]">Copilot</Cell>
        <Sep />
        <Cell className="ml-[62px] pt-[32px]"><Chevron /></Cell>
      </div>

      {/* body */}
      <div className="flex h-[853px] shrink-0 border-b border-[#dddbd9]">
        <div className="flex w-[48px] shrink-0 flex-col items-center border-r border-[#dddbd9] pr-[3px]">
          <Svg w={18} h={18} className="mt-[15px]" sw={1.6}><path d="M1 0v17h17" stroke="#1b1a19" /><path d="M4 4h2.500v10H4zM9 7h2.500v7H9zM13.500 1.500H16V14h-2.500z" stroke="#1b1a19" fill={L} /></Svg>
          <Svg w={22} h={21} className="mt-[30px]" sw={1.4}><path d="M1 2.500h20" stroke={L} strokeWidth="3" /><path d="M1 1h20v19H1zM1 5h20M1 10h20M1 15h20M8 5v15M14.500 5v15" stroke="#797775" /></Svg>
          <Svg w={24} h={23} className="mt-[28px]" sw={1.5}><path d="M1 7h9v9H1zM1 10h9M13.500 1h9v8h-9zM13.500 4h9M13.500 13.500h9V22h-9zM13.500 16.500h9M5.500 7V3.500h8M5.500 16v3.500h8" stroke="#797775" /></Svg>
          <Svg w={24} h={23} className="mt-[28px]" sw={1.3}>
            <path d="M6 12V1h7l5 5v13h-3M12.500 1v6H18M20 7v12h-3M22.500 8.500V16l-3 5" stroke="#797775" />
            <text x="0" y="21" fontSize="9.500" fontWeight="700" fill="#797775" stroke="#f3f2f1" strokeWidth="2" paintOrder="stroke" className="font-['Open_Sans',sans-serif]">DAX</text>
          </Svg>
        </div>

        <div className="flex w-[1417px] shrink-0 flex-col">
          <div className="flex">
            <Canvas />
            <div className="flex flex-1 flex-col items-center border-l border-[#c8c6c4] bg-white">
              <div className="mt-[14px]"><DblChev left /></div>
              <Svg w={16} h={17} className="mt-[19px] ml-[6px]"><path d="M14.500 1v14.500L8.500 10.500H1.500V6.500h7z" /></Svg>
              <span className="mt-[10px] text-[17px] leading-[20px] font-semibold tracking-[0.4px] [writing-mode:vertical-rl]">Filters</span>
            </div>
          </div>
          {/* page tabs */}
          <div className="flex h-[44px]">
            <div className="ml-[13px] flex w-[30px] flex-col items-center">
              <Svg w={26} h={22} className="mt-[7px]"><path d="M1.500 2h23v14h-23zM13 16v4M8.500 20.500h9" stroke="#605e5c" /></Svg>
              <div className="mt-[6px] h-[3px] w-full rounded bg-[#117865]" />
            </div>
            <Svg w={18} h={26} className="mt-[6px] ml-[31px]" sw={1.8}><rect x="1" y="1" width="15" height="23.500" rx="1.500" stroke="#605e5c" /><path d="M7 21.500h3" stroke="#605e5c" /></Svg>
            <svg width="6" height="11" viewBox="0 0 6 11" className="mt-[16px] ml-[25px]"><path d="M6 0v11L0 5.500z" fill="#c8c6c4" /></svg>
            <svg width="6" height="11" viewBox="0 0 6 11" className="mt-[16px] ml-[22px]"><path d="M0 0v11l6-5.500z" fill="#c8c6c4" /></svg>
            <div className="ml-[8px] flex w-[94px] items-center justify-center border-l border-[#979593] bg-white pt-px text-[14.6px] tracking-[-0.3px]">HOME</div>
            <div className="relative flex w-[126px] items-center justify-center border-l border-b-[5px] border-b-[#117865] border-l-[#c8c6c4] bg-white pt-[6px] text-[14.6px] font-semibold tracking-[-0.35px]">
              OVERVIEW
              <span className="absolute top-[5px] right-[6px] text-[13px] font-semibold">x</span>
            </div>
            <div className="ml-px flex w-[48px] items-center justify-center bg-[#117865] pb-[3px]"><Svg w={14} h={14} sw={3.5}><path d="M7 0v14M0 7h14" stroke="#fff" /></Svg></div>
          </div>
        </div>

        {/* visualizations */}
        <div className="flex w-[226px] shrink-0 flex-col border-l border-[#dddbd9]">
          <div className="mt-[13px] flex h-[24px] items-center justify-between pr-[9px] pl-[10px]"><span className="pt-px text-[17.8px] font-semibold tracking-[-0.25px]">Visualizations</span><DblChev /></div>
          <div className="mt-[11px] pl-[10px] text-[14px] leading-[20px] font-semibold tracking-[-0.4px]">Build visual</div>
          <div className="mt-[4px] flex h-[40px] items-center pl-[10px]">
            <div className="flex size-10 items-center justify-center rounded-[3px] bg-[#cfcdcb]">
              <Svg w={32} h={32}><path d="M2 2h23" /><rect x="2" y="7.500" width="28" height="9" fill="#117865" strokeDasharray="3 1.500" stroke="#1b1a19" /><rect x="2" y="21" width="28" height="9" fill="#117865" strokeDasharray="3 1.500" stroke="#1b1a19" /></Svg>
            </div>
            <Svg w={32} h={32} className="ml-[47px]" sw={1.4}><path d="M7 31H2V1.500h12l7 7.500v3M13.500 1.500V9h7M30 12c-2-1-8 5-12 11l3 3c5-4 10-12 9-14zM17 24c-4-1-5 2-5 4-1 2-2 2-3 3 4 1 11 0 11-5" stroke="#1b1a19" /></Svg>
          </div>
          <svg width="225" height="11" viewBox="0 0 225 11" fill="none" stroke="#979593" strokeWidth="1.3" className="mt-[6px] shrink-0"><path d="M0 9.500h21L30.500 1 40 9.500h185" /></svg>
          <div className="mt-[12px] ml-[14px] grid h-[244px] grid-cols-[repeat(6,35px)] content-start gap-y-[12px]">
            {gallery.map((g, i) => (
              <svg key={i} width="23" height="23" viewBox="0 0 23 23" fill="none" stroke={D} strokeWidth="1.5" overflow="visible">{g}</svg>
            ))}
          </div>
          <div className="mt-[10px] ml-[17px] flex gap-[6px]"><i className="size-[2px] bg-[#252423]" /><i className="size-[2px] bg-[#252423]" /><i className="size-[2px] bg-[#252423]" /></div>
          <div className="mt-[23px] h-px shrink-0 bg-[#dddbd9]" />
          <div className="mt-[12px] pl-[15px] text-[13.8px] leading-[18px]">Values</div>
          <div className="mt-[8px] ml-[5px] flex h-[35px] w-[213px] items-center border border-dashed border-[#c0bebc] bg-white pb-px pl-[12px] text-[14px] tracking-[0.1px]">Add data fields here</div>
          <div className="mt-[14px] pl-[15px] text-[14px] leading-[18px] font-semibold tracking-[-0.1px] text-[#484644]">Drill through</div>
          <div className="mt-[13px] flex h-[20px] items-center justify-between pr-[27px] pl-[15px] text-[14px]">
            <span>Cross-report</span>
            <div className="flex h-5 w-10 items-center gap-[2px] rounded-full border border-[#605e5c] bg-white pl-[5px] text-[11px] text-[#605e5c]"><i className="size-[10px] rounded-full bg-[#605e5c]" />Off</div>
          </div>
          <div className="mt-[14px] flex h-[20px] items-center justify-between pr-[27px] pl-[15px] text-[14px]">
            <span className="pb-[2px]">Keep all filters</span>
            <div className="flex h-5 w-10 items-center gap-[4px] rounded-full bg-[#117865] pl-[6px] text-[11px] text-white">On<i className="size-[10px] rounded-full bg-white" /></div>
          </div>
          <div className="mt-[12px] ml-[5px] flex h-[32px] w-[213px] items-center border border-dashed border-[#c0bebc] bg-white pt-px pl-[10px] text-[14px] tracking-[0.16px] whitespace-nowrap">Add drill-through fields here</div>
        </div>

        {/* data */}
        <div className="flex w-[217px] shrink-0 flex-col border-l border-[#dddbd9]">
          <div className="mt-[13px] flex h-[24px] items-center justify-between pl-[10px]"><span className="pt-px text-[17.8px] font-semibold tracking-[0.05px]">Data</span><DblChev /></div>
          <div className="mt-[19px] ml-[5px] flex h-[31px] items-center rounded-l-[5px] border border-r-0 border-[#c8c6c4] border-b-[#605e5c] bg-white text-[16px] text-[#605e5c]">
            <Svg w={19} h={19} className="mr-[8px] ml-[14px]" sw={1.3}><circle cx="8" cy="7.500" r="6" /><path d="M12.500 12l5 5.500" /></Svg>
            Search
          </div>
          <div className="mt-[12px] flex flex-col">
            {tables.map((t, i) => (
              <div key={t} className="flex h-[30px] items-center text-[14.1px] text-[#323130]">
                <Svg w={10} h={16} className="mr-[6px] ml-[19px]" sw={1.1}><path d="M1 1l7.500 7L1 15" stroke="#605e5c" /></Svg>
                <TableIcon calc={i === 1} />
                <span className="ml-[3.5px] whitespace-nowrap">{t}</span>
              </div>
            ))}
          </div>
        </div>
      </div>

      {/* status bar */}
      <div className="flex h-[28px] shrink-0 items-center text-[14px] text-[#484644]">
        <span className="mt-[3px] pl-[2px] tracking-[0.16px]">Page 2 of 2</span>
        <div className="ml-auto h-[2px] w-[6px] bg-[#484644]" />
        <div className="ml-[5px] flex h-[14px] w-[125px] items-center">
          <div className="h-px w-[50px] bg-[#605e5c]" /><div className="h-[13px] w-[5px] bg-[#605e5c]" /><div className="h-px w-[7px] bg-[#605e5c]" /><div className="h-[7px] w-px bg-[#605e5c]" /><div className="h-px flex-1 bg-[#605e5c]" />
        </div>
        <Svg w={10} h={10} className="ml-[7px]" sw={1.8}><path d="M5 0v10M0 5h10" stroke="#484644" /></Svg>
        <span className="ml-[16px] w-[52px] text-[14px] text-[#605e5c]">86%</span>
        <Svg w={21} h={16} className="mr-[13px]" sw={1.5}><path d="M1 1h19v14H1z" stroke="#797775" /><path d="M4 6.500V4h3M14 4h3v2.500M4 9.500V12h3M14 12h3V9.500" stroke="#797775" /></Svg>
      </div>
      <div className="h-[4px] shrink-0 border-t border-black bg-[#18292e]" />
    </div>
  );
}
